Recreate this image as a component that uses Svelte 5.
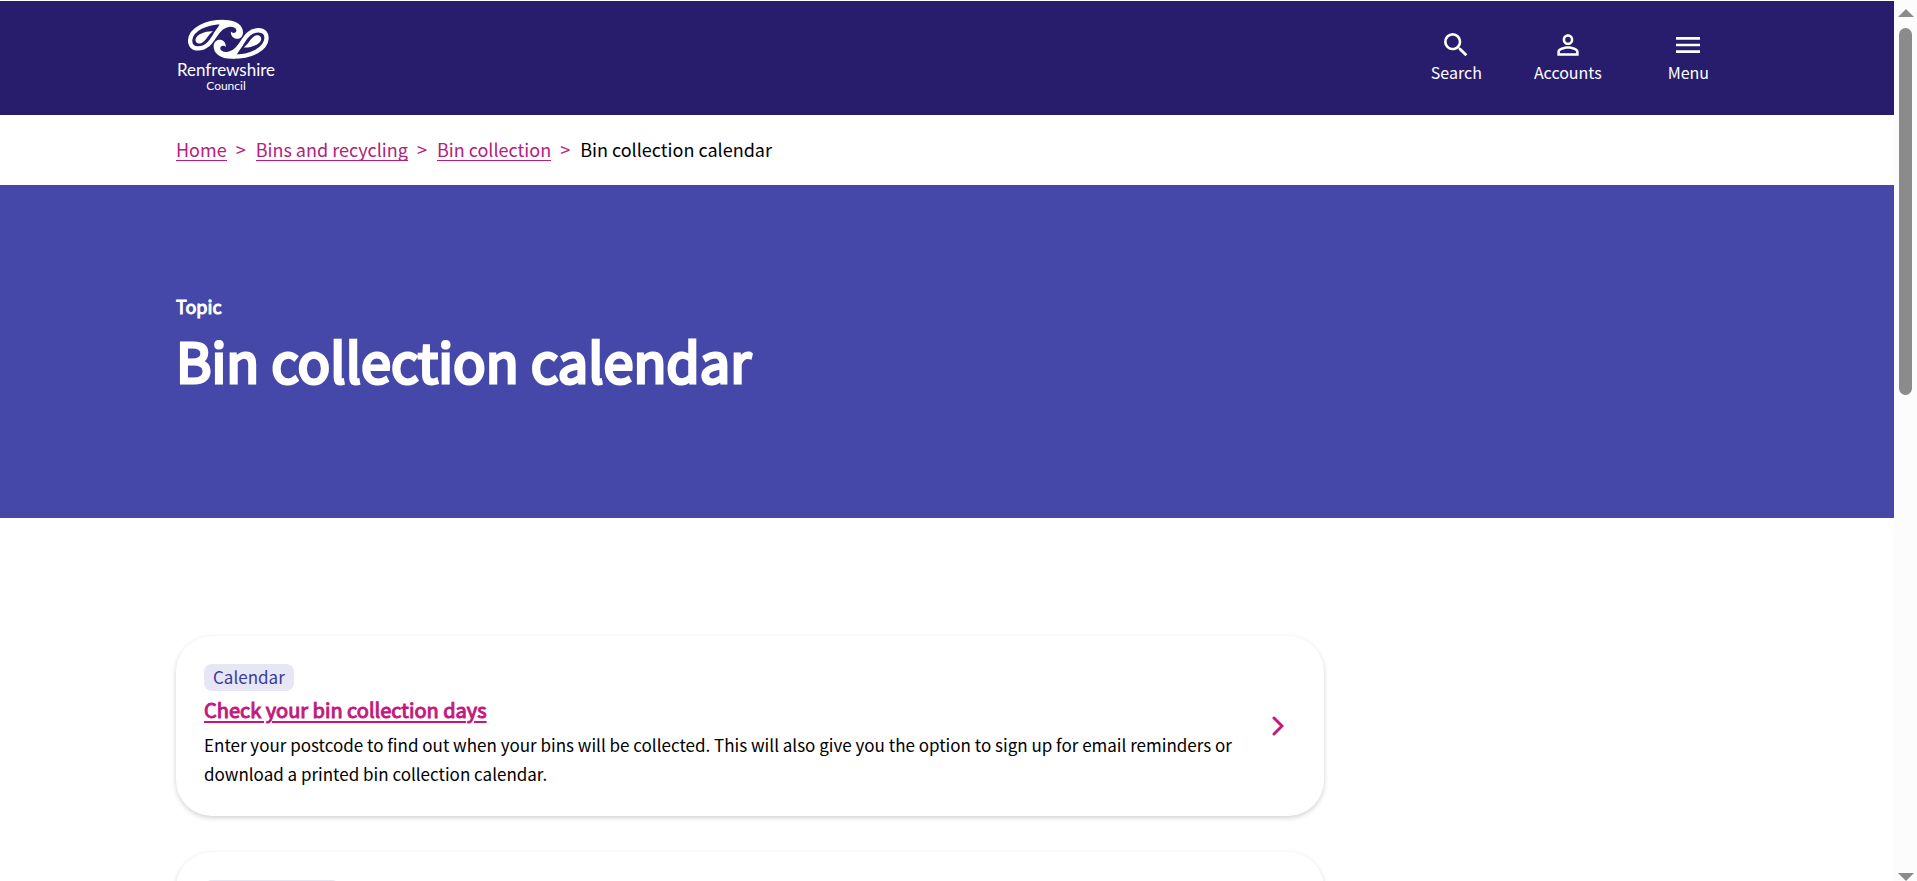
<script>
  const crumbs = ['Home', 'Bins and recycling', 'Bin collection'];
</script>

{#snippet paisley()}
  <path d="M190 64C184 74 175 88 164 104C150 126 138 143 113 143C97 143 88 133 89 118C91 86 135 63 190 63" fill="none" stroke="#fff" stroke-width="13" stroke-linejoin="round" />
  <path d="M186 57C224 54 249 71 249 94C249 108 239 115 229 114C218 113 212 104 212 92C218 99 229 97 229 88C228 80 217 76 206 78C191 81 180 91 168 109L160 98C170 84 178 74 186 69Z" fill="#fff" />
  <path d="M158 91C141 89 108 98 105 116C105 127 113 130 122 127C137 121 143 101 158 91Z" fill="#fff" />
{/snippet}

<div class="shell">
  <div class="page">
    <header>
      <a class="logo" href="#home">
        <svg viewBox="80 54 250 124" aria-hidden="true">
          {@render paisley()}
          <g transform="rotate(180 204.500 115.500)">{@render paisley()}</g>
        </svg>
        <span class="name">Renfrewshire</span>
        <span class="sub">Council</span>
      </a>
      <nav class="tools" aria-label="Site tools">
        <button type="button">
          <svg viewBox="0 0 24 24" fill="#fff" aria-hidden="true"><path d="M15.5 14h-.79l-.28-.27A6.47 6.47 0 0 0 16 9.500 6.500 6.500 0 1 0 9.500 16c1.610 0 3.090-.59 4.230-1.570l.27.28v.79l5 4.990L20.490 19zm-6 0C7.010 14 5 11.990 5 9.500S7.010 5 9.500 5 14 7.010 14 9.500 11.990 14 9.500 14" /></svg>
          <span>Search</span>
        </button>
        <button type="button">
          <svg viewBox="0 0 24 24" fill="#fff" aria-hidden="true"><path d="M12 5.900a2.100 2.100 0 1 1 0 4.200 2.100 2.100 0 0 1 0-4.200m0 9c2.970 0 6.100 1.460 6.100 2.100v1.100H5.900V17c0-.64 3.130-2.100 6.100-2.100M12 4C9.790 4 8 5.790 8 8s1.790 4 4 4 4-1.790 4-4-1.790-4-4-4m0 9c-2.670 0-8 1.340-8 4v3h16v-3c0-2.660-5.330-4-8-4" /></svg>
          <span>Accounts</span>
        </button>
        <button type="button">
          <svg viewBox="0 0 24 24" fill="#fff" aria-hidden="true"><path d="M3 18h18v-2H3zm0-5h18v-2H3zm0-7v2h18V6z" /></svg>
          <span>Menu</span>
        </button>
      </nav>
    </header>

    <nav class="crumbs" aria-label="Breadcrumb">
      {#each crumbs as crumb}
        <a href="#{crumb.toLowerCase().replaceAll(' ', '-')}">{crumb}</a>
        <span class="sep">&gt;</span>
      {/each}
      <span>Bin collection calendar</span>
    </nav>

    <section class="hero">
      <p>Topic</p>
      <h1>Bin collection calendar</h1>
    </section>

    <main>
      <article class="card">
        <div class="body">
          <span class="tag">Calendar</span>
          <h2><a href="#days">Check your bin collection days</a></h2>
          <p>Enter your postcode to find out when your bins will be collected. This will also give you the option to sign up for email reminders or download a printed bin collection calendar.</p>
        </div>
        <svg class="chevron" viewBox="0 0 12 20" aria-hidden="true"><path d="M2 2L10 10L2 18" fill="none" stroke="#c4187c" stroke-width="3" stroke-linecap="round" /></svg>
      </article>
      <article class="card">
        <div class="body"><span class="tag wide"></span></div>
      </article>
    </main>
  </div>

  <div class="scrollbar" aria-hidden="true">
    <svg viewBox="0 0 16 8"><path d="M8 0L16 8H0Z" /></svg>
    <div class="track"><div class="thumb"></div></div>
    <svg viewBox="0 0 16 8"><path d="M0 0H16L8 8Z" /></svg>
  </div>
</div>

<style>
  :global(body) {
    margin: 0;
    background: #fff;
  }
  .shell {
    display: flex;
    height: 100vh;
    overflow: hidden;
    font-family: 'Noto Sans CJK SC', 'Noto Sans', sans-serif;
    color: #000;
  }
  .page {
    flex: 1;
    min-width: 0;
    overflow: hidden;
  }
  header {
    display: flex;
    justify-content: space-between;
    align-items: flex-start;
    box-sizing: border-box;
    height: 115px;
    padding: 18px 176px 0;
    border-top: 1px solid #fff;
    background: #271d6c;
    color: #fff;
  }
  .logo {
    display: flex;
    flex-direction: column;
    align-items: center;
    width: 100px;
    color: #fff;
    text-decoration: none;
    font-family: Lato, sans-serif;
  }
  .logo svg {
    width: 83px;
    height: 41px;
    margin-left: 4px;
  }
  .name {
    font-size: 17px;
    line-height: 19px;
  }
  .sub {
    font-size: 12px;
    line-height: 13px;
  }
  .tools {
    display: flex;
    gap: 52px;
    padding: 10px 9px 0 0;
  }
  .tools button {
    display: flex;
    flex-direction: column;
    align-items: center;
    padding: 0;
    border: 0;
    background: none;
    color: #fff;
    font: 400 16px/22px 'Noto Sans CJK SC', sans-serif;
  }
  .tools button:last-child {
    margin-left: 14px;
  }
  .tools svg {
    width: 32px;
    height: 32px;
  }
  .crumbs {
    display: flex;
    align-items: center;
    gap: 9px;
    box-sizing: border-box;
    height: 70px;
    padding: 0 176px 2px;
    font-size: 18px;
    line-height: 24px;
  }
  .crumbs a {
    border-bottom: 1px solid #b4207c;
    color: #b4207c;
    text-decoration: none;
    line-height: 22px;
  }
  .sep {
    margin-right: 1px;
    color: #b4207c;
  }
  .hero {
    display: flex;
    flex-direction: column;
    justify-content: center;
    box-sizing: border-box;
    height: 333px;
    padding: 0 176px 17px;
    background: #4547a9;
    color: #fff;
  }
  .hero p {
    margin: 0;
    font-size: 18px;
    line-height: 32px;
    -webkit-text-stroke: 1px currentColor;
  }
  .hero h1 {
    margin: 0;
    font-size: 54px;
    font-weight: 400;
    line-height: 75px;
    -webkit-text-stroke: 3px currentColor;
  }
  main {
    display: flex;
    flex-direction: column;
    gap: 36px;
    width: 75%;
    max-width: 1148px;
    padding: 118px 0 0 176px;
  }
  .card {
    display: flex;
    align-items: center;
    justify-content: space-between;
    box-sizing: border-box;
    padding: 28px 40px 28px 28px;
    border-radius: 36px;
    box-shadow: 0 2px 5px rgba(0, 0, 0, 0.18);
  }
  .body {
    max-width: 1048px;
  }
  .tag {
    display: inline-block;
    padding: 0 9px 2px;
    border-radius: 8px;
    background: #e6e6f5;
    color: #3b3b98;
    font-size: 17px;
    line-height: 25px;
    vertical-align: top;
  }
  .wide {
    width: 118px;
    height: 27px;
  }
  .card h2 {
    margin: 0 0 1px;
    font-size: 20px;
    font-weight: 400;
    line-height: 38px;
    -webkit-text-stroke: 1px currentColor;
  }
  .card h2 a {
    color: #c4187c;
    text-decoration-thickness: 2px;
    text-underline-offset: 3px;
  }
  .card p {
    margin: 0;
    font-size: 17px;
    line-height: 29px;
  }
  .chevron {
    flex: none;
    width: 12px;
    height: 20px;
  }
  .scrollbar {
    display: flex;
    flex-direction: column;
    align-items: center;
    box-sizing: border-box;
    width: 23px;
    padding: 9px 0 0;
    background: #fcfcfc;
  }
  .scrollbar svg {
    flex: none;
    width: 16px;
    height: 8px;
    fill: #8b8b8b;
  }
  .track {
    display: flex;
    flex: 1;
    flex-direction: column;
    width: 13px;
    padding: 11px 0 0;
  }
  .track::after {
    flex: 13;
    content: '';
  }
  .thumb {
    flex: 10;
    border-radius: 8px;
    background: #8b8b8b;
  }
</style>
